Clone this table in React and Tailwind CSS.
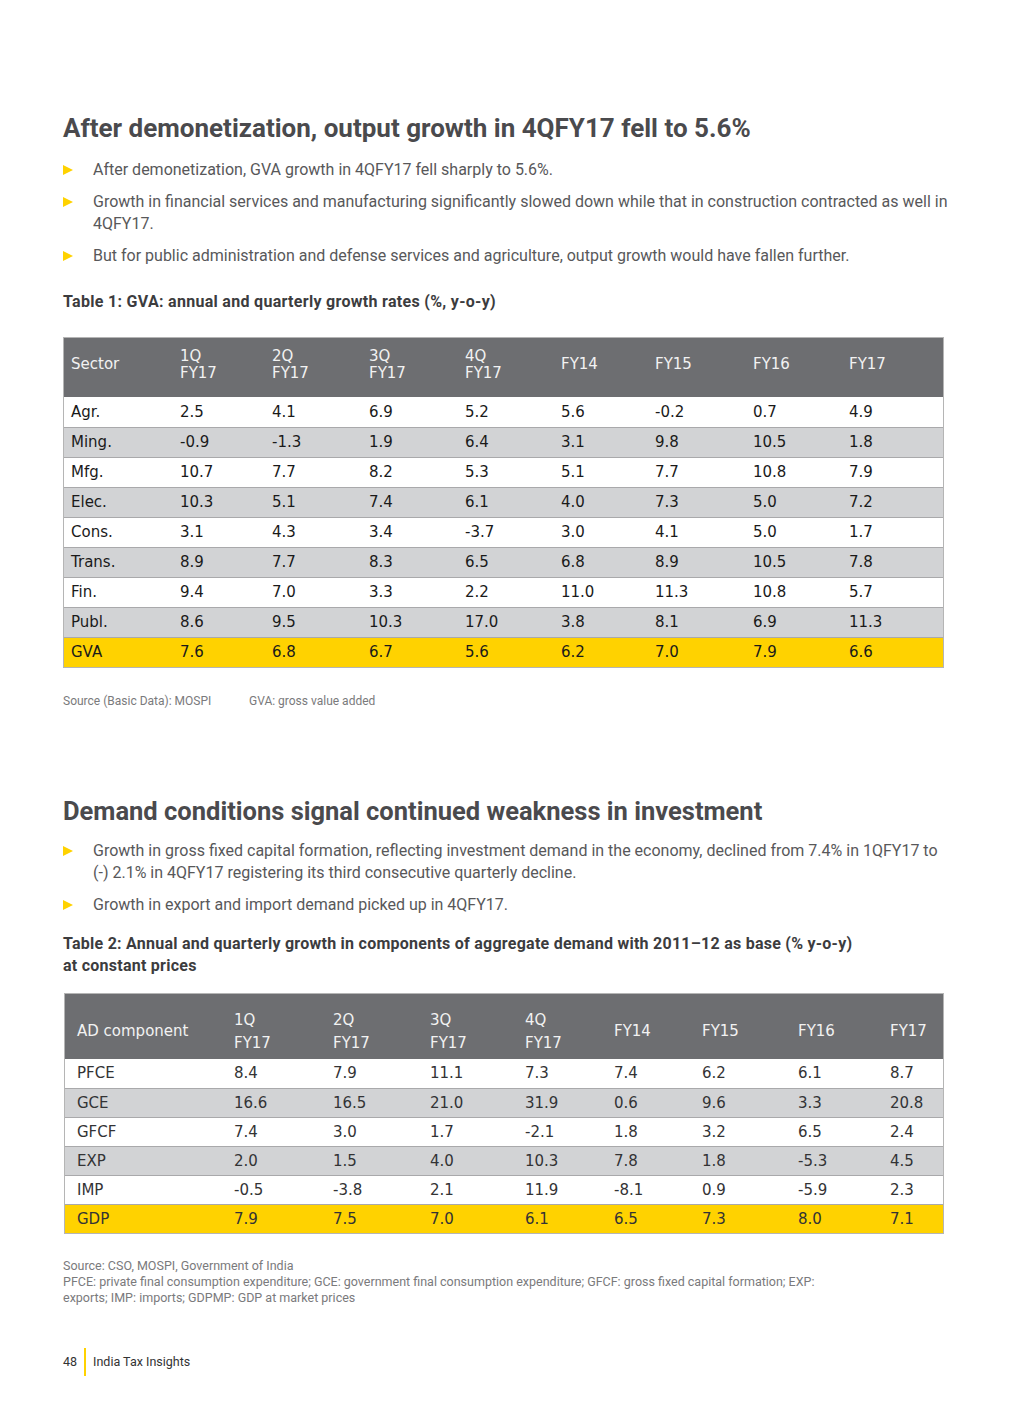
import React from "react";

const body = { fontFamily: "Roboto, 'Liberation Sans', sans-serif" };
const verd = { fontFamily: "'DejaVu Sans', Verdana, sans-serif" };

function Bullet({ children }) {
  return (
    <li className="flex">
      <span className="w-[30px] shrink-0 pt-[6px]">
        <svg width="10" height="10" viewBox="0 0 10 10">
          <polygon points="0,0 10,5 0,10" fill="#ffd200" />
        </svg>
      </span>
      <span>{children}</span>
    </li>
  );
}

const t1 = [
  ["Agr.", "2.5", "4.1", "6.9", "5.2", "5.6", "-0.2", "0.7", "4.9"],
  ["Ming.", "-0.9", "-1.3", "1.9", "6.4", "3.1", "9.8", "10.5", "1.8"],
  ["Mfg.", "10.7", "7.7", "8.2", "5.3", "5.1", "7.7", "10.8", "7.9"],
  ["Elec.", "10.3", "5.1", "7.4", "6.1", "4.0", "7.3", "5.0", "7.2"],
  ["Cons.", "3.1", "4.3", "3.4", "-3.7", "3.0", "4.1", "5.0", "1.7"],
  ["Trans.", "8.9", "7.7", "8.3", "6.5", "6.8", "8.9", "10.5", "7.8"],
  ["Fin.", "9.4", "7.0", "3.3", "2.2", "11.0", "11.3", "10.8", "5.7"],
  ["Publ.", "8.6", "9.5", "10.3", "17.0", "3.8", "8.1", "6.9", "11.3"],
  ["GVA", "7.6", "6.8", "6.7", "5.6", "6.2", "7.0", "7.9", "6.6"],
];

const t2 = [
  ["PFCE", "8.4", "7.9", "11.1", "7.3", "7.4", "6.2", "6.1", "8.7"],
  ["GCE", "16.6", "16.5", "21.0", "31.9", "0.6", "9.6", "3.3", "20.8"],
  ["GFCF", "7.4", "3.0", "1.7", "-2.1", "1.8", "3.2", "6.5", "2.4"],
  ["EXP", "2.0", "1.5", "4.0", "10.3", "7.8", "1.8", "-5.3", "4.5"],
  ["IMP", "-0.5", "-3.8", "2.1", "11.9", "-8.1", "0.9", "-5.9", "2.3"],
  ["GDP", "7.9", "7.5", "7.0", "6.1", "6.5", "7.3", "8.0", "7.1"],
];

const g1 = "grid grid-cols-[108px_92px_97px_96px_96px_94px_98px_96px_1fr]";
const g2 = "grid grid-cols-[156px_99px_97px_95px_89px_88px_96px_92px_1fr]";

export default function App() {
  return (
    <div className="w-[1024px] h-[1408px] bg-white relative" style={body}>
      <div className="pl-[63px] pr-[70px] pt-[112px]">
        <h1 className="text-[26px] leading-[32px] font-bold text-[#4a4a4d]">
          After demonetization, output growth in 4QFY17 fell to 5.6%
        </h1>
        <ul className="mt-[15px] text-[16px] leading-[22px] text-[#58585a] flex flex-col gap-[10px]">
          <Bullet>After demonetization, GVA growth in 4QFY17 fell sharply to 5.6%.</Bullet>
          <Bullet>
            Growth in financial services and manufacturing significantly slowed down while that in construction contracted as well in 4QFY17.
          </Bullet>
          <Bullet>
            But for public administration and defense services and agriculture, output growth would have fallen further.
          </Bullet>
        </ul>
        <p className="mt-[24px] text-[16px] leading-[22px] font-bold text-[#3c3c3e] tracking-[0.3px]">
          Table 1: GVA: annual and quarterly growth rates (%, y-o-y)
        </p>

        <div className="mt-[24px] w-[881px] border border-[#b5b5b5] text-[15px]" style={verd}>
          <div className={`${g1} bg-[#6d6e71] text-[#f2f2f2] h-[59px] pb-[6px] items-center`}>
            <div className="pl-[7px]">Sector</div>
            {["1Q", "2Q", "3Q", "4Q"].map((q) => (
              <div key={q} className="pl-[8px] leading-[17px]">
                {q}
                <br />
                FY17
              </div>
            ))}
            {["FY14", "FY15", "FY16", "FY17"].map((q) => (
              <div key={q} className="pl-[8px]">{q}</div>
            ))}
          </div>
          {t1.map((r, i) => {
            const last = i === t1.length - 1;
            const bg = last ? "bg-[#ffd200]" : i % 2 === 1 ? "bg-[#d2d3d5]" : "bg-white";
            return (
              <div
                key={r[0]}
                className={`${g1} ${bg} h-[30px] items-center text-[#1a1a1a] ${i > 0 ? "border-t border-[#a9a9ab]" : ""}`}
              >
                {r.map((c, j) => (
                  <div key={j} className={j === 0 ? "pl-[7px]" : "pl-[8px]"}>
                    {c}
                  </div>
                ))}
              </div>
            );
          })}
        </div>

        <div className="mt-[25px] flex text-[12px] leading-[16px] text-[#7a7a7c]">
          <span className="w-[186px]">Source (Basic Data): MOSPI</span>
          <span>GVA: gross value added</span>
        </div>

        <h1 className="mt-[86px] text-[25.5px] leading-[32px] font-bold text-[#4a4a4d]">
          Demand conditions signal continued weakness in investment
        </h1>
        <ul className="mt-[13px] text-[16px] leading-[22px] text-[#58585a] flex flex-col gap-[10px]">
          <Bullet>
            Growth in gross fixed capital formation, reflecting investment demand in the economy, declined from 7.4% in 1QFY17 to (-) 2.1% in 4QFY17 registering its third consecutive quarterly decline.
          </Bullet>
          <Bullet>Growth in export and import demand picked up in 4QFY17.</Bullet>
        </ul>
        <p className="mt-[17px] text-[16px] leading-[22px] font-bold text-[#3c3c3e] tracking-[0.25px]">
          Table 2: Annual and quarterly growth in components of aggregate demand with 2011–12 as base (% y-o-y)
          <br />
          at constant prices
        </p>

        <div className="mt-[16px] ml-[1px] w-[880px] border border-[#b5b5b5] text-[15px]" style={verd}>
          <div className={`${g2} bg-[#6d6e71] text-[#f2f2f2] h-[65px] pt-[10px] items-center`}>
            <div className="pl-[12px]">AD component</div>
            {["1Q", "2Q", "3Q", "4Q"].map((q) => (
              <div key={q} className="pl-[13px] leading-[23px]">
                {q}
                <br />
                FY17
              </div>
            ))}
            {["FY14", "FY15", "FY16", "FY17"].map((q) => (
              <div key={q} className="pl-[13px]">{q}</div>
            ))}
          </div>
          {t2.map((r, i) => {
            const last = i === t2.length - 1;
            const bg = last ? "bg-[#ffd200]" : i % 2 === 1 ? "bg-[#d2d3d5]" : "bg-white";
            return (
              <div
                key={r[0]}
                className={`${g2} ${bg} h-[29px] items-center text-[#333335] ${i > 0 ? "border-t border-[#a9a9ab]" : ""}`}
              >
                {r.map((c, j) => (
                  <div key={j} className={j === 0 ? "pl-[12px]" : "pl-[13px]"}>
                    {c}
                  </div>
                ))}
              </div>
            );
          })}
        </div>

        <div className="mt-[24px] text-[12.5px] leading-[16px] text-[#7a7a7c] w-[780px]">
          <p>Source: CSO, MOSPI, Government of India</p>
          <p>
            PFCE: private final consumption expenditure; GCE: government final consumption expenditure; GFCF: gross fixed capital formation; EXP: exports; IMP: imports; GDPMP: GDP at market prices
          </p>
        </div>
      </div>

      <div className="absolute left-[63px] top-[1348px] flex items-stretch text-[12.5px] text-[#333]">
        <span className="self-center">48</span>
        <span className="mx-[7px] w-[2px] h-[28px] bg-[#ffd200]" />
        <span className="self-center">India Tax Insights</span>
      </div>
    </div>
  );
}
